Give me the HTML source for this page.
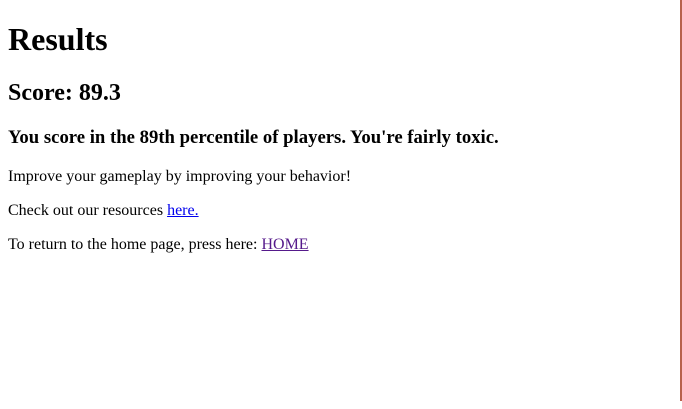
<!DOCTYPE html>
<html><head><style>
html,body{margin:0;height:401px;overflow:hidden;background:#fff}
body{margin:8px;font-family:"Liberation Serif",serif;}
h1{font-size:32px;margin:21.44px 0}
h2{font-size:24px;margin:19.92px 0}
h3{font-size:18.72px;margin:18.72px 0}
p{font-size:16px;margin:16px 0}
a{color:#0000ee}
a.v{color:#551a8b}
.line{position:fixed;left:680px;top:0;width:2px;height:401px;background:#b7614c}
</style></head><body>
<h1>Results</h1>
<h2>Score: 89.3</h2>
<h3>You score in the 89th percentile of players. You're fairly toxic.</h3>
<p>Improve your gameplay by improving your behavior!</p>
<p>Check out our resources <a href="#">here.</a></p>
<p>To return to the home page, press here: <a class="v" href="#">HOME</a></p>
<div class="line"></div>
</body></html>
